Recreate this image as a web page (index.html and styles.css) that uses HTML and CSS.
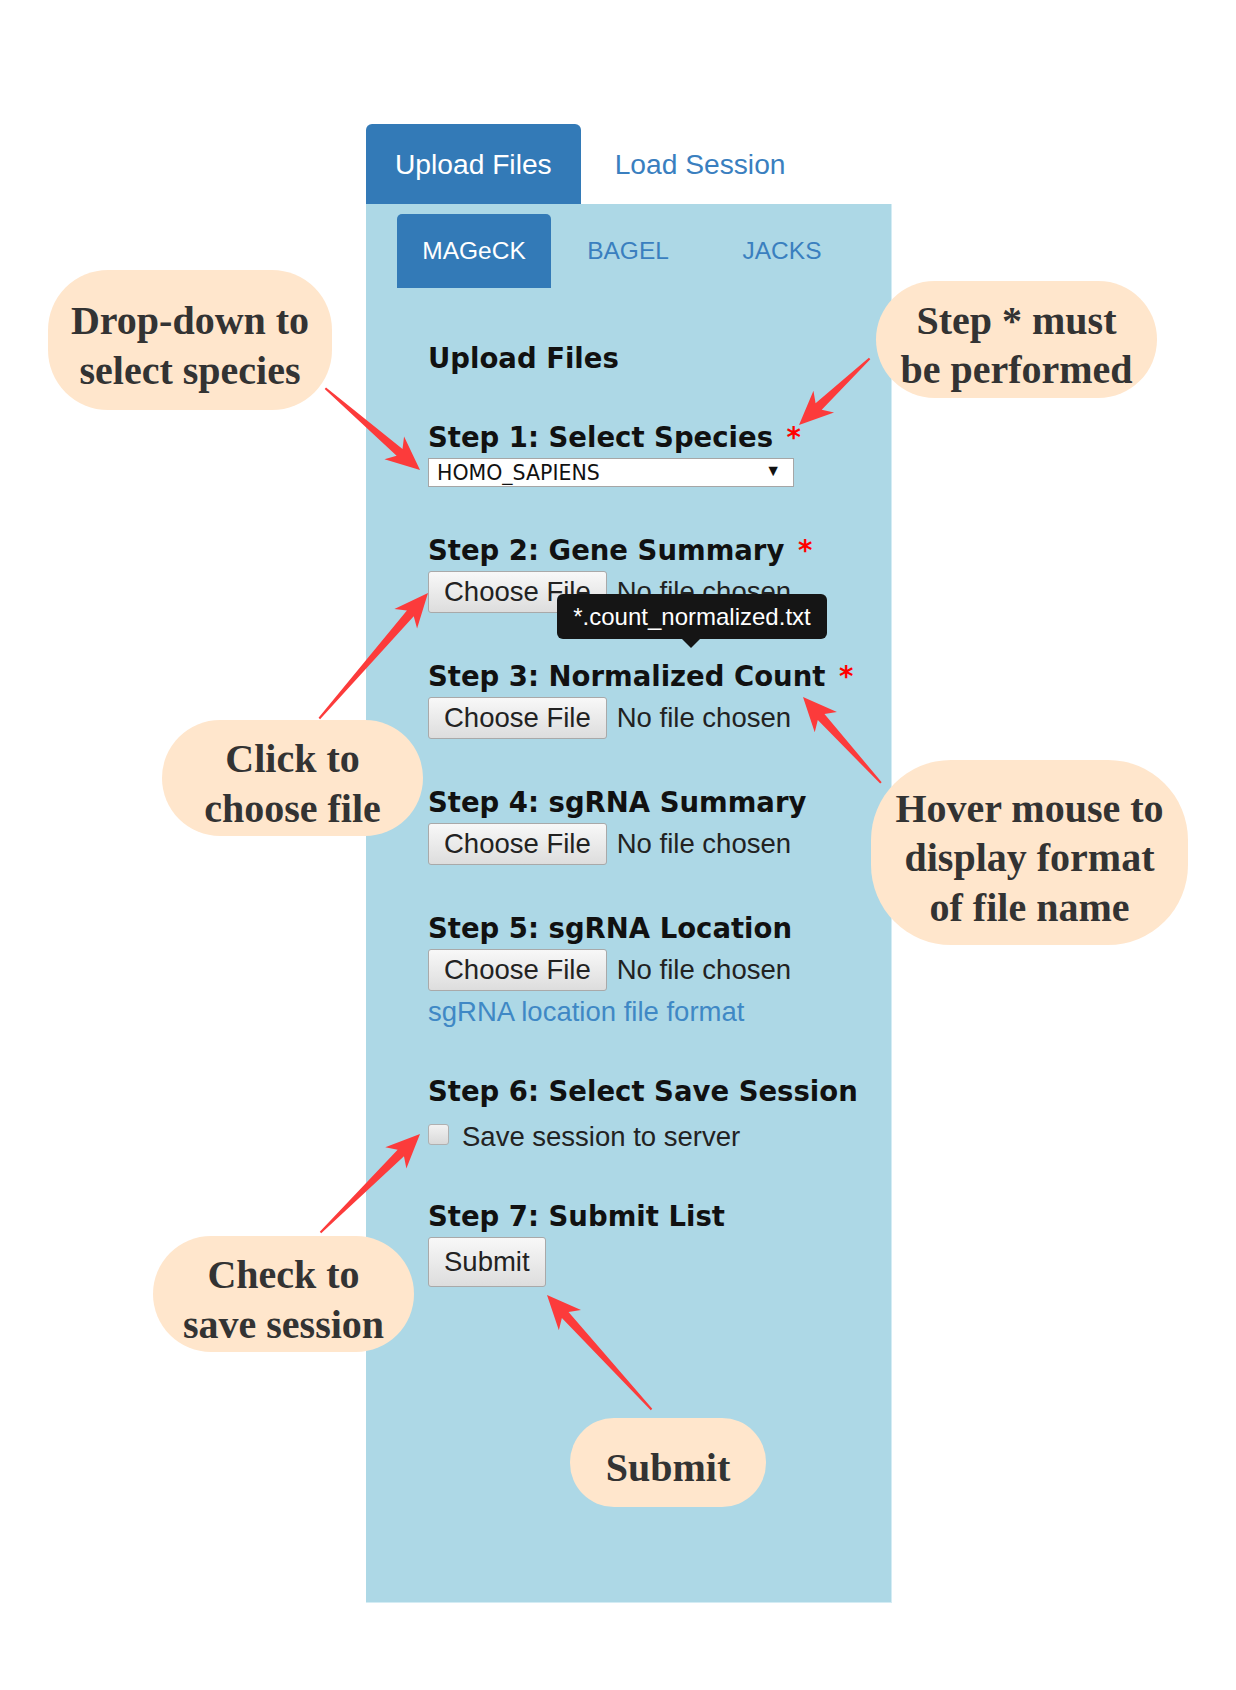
FILE: index.html
```html
<!DOCTYPE html>
<html>
<head>
  <title>Upload Files</title>
  <link rel="stylesheet" href="styles.css">
</head>
<body>
  <div class="page">
    <div class="app">
      <ul class="top-tabs">
        <li class="active"><a href="#">Upload Files</a></li>
        <li><a href="#">Load Session</a></li>
      </ul>

      <div class="panel">
        <ul class="sub-tabs">
          <li class="active"><a href="#">MAGeCK</a></li>
          <li><a href="#">BAGEL</a></li>
          <li><a href="#">JACKS</a></li>
        </ul>

        <div class="form">
          <h3>Upload Files</h3>

          <div class="step">
            <label>Step 1: Select Species <span class="req">*</span></label>
            <div class="select-wrap">
              <select>
                <option>HOMO_SAPIENS</option>
              </select>
            </div>
          </div>

          <div class="step">
            <label>Step 2: Gene Summary <span class="req">*</span></label>
            <div class="file-row">
              <button class="btn">Choose File</button>
              <span class="file-note">No file chosen</span>
            </div>
          </div>

          <div class="step">
            <label>Step 3: Normalized Count <span class="req">*</span></label>
            <div class="file-row">
              <button class="btn">Choose File</button>
              <span class="file-note">No file chosen</span>
            </div>
          </div>

          <div class="step">
            <label>Step 4: sgRNA Summary</label>
            <div class="file-row">
              <button class="btn">Choose File</button>
              <span class="file-note">No file chosen</span>
            </div>
          </div>

          <div class="step">
            <label>Step 5: sgRNA Location</label>
            <div class="file-row">
              <button class="btn">Choose File</button>
              <span class="file-note">No file chosen</span>
            </div>
            <a class="format-link" href="#">sgRNA location file format</a>
          </div>

          <div class="step">
            <label>Step 6: Select Save Session</label>
            <div class="check-row">
              <input type="checkbox" id="save">
              <span>Save session to server</span>
            </div>
          </div>

          <div class="step step-submit">
            <label>Step 7: Submit List</label>
            <button class="btn btn-submit">Submit</button>
          </div>
        </div>
      </div>
    </div>

    <!-- annotation arrows -->
    <svg class="arrows" width="1236" height="1690">
      <polygon transform="translate(420,470) rotate(40.8)" points="0,0 -34,-15 -27,-4.5 -125,-1 -125,1 -27,4.5 -34,15"/>
      <polygon transform="translate(799,425) rotate(136.7)" points="0,0 -34,-15 -27,-4.5 -97,-1 -97,1 -27,4.5 -34,15"/>
      <polygon transform="translate(428,593) rotate(-49.1)" points="0,0 -34,-15 -27,-4.5 -166,-1 -166,1 -27,4.5 -34,15"/>
      <polygon transform="translate(803,697) rotate(-132.2)" points="0,0 -34,-15 -27,-4.5 -116,-1 -116,1 -27,4.5 -34,15"/>
      <polygon transform="translate(420,1134) rotate(-44.7)" points="0,0 -34,-15 -27,-4.5 -140,-1 -140,1 -27,4.5 -34,15"/>
      <polygon transform="translate(547,1295) rotate(-132.4)" points="0,0 -34,-15 -27,-4.5 -155,-1 -155,1 -27,4.5 -34,15"/>
    </svg>

    <div class="tooltip">*.count_normalized.txt</div>

    <div class="note note-species">Drop-down to<br>select species</div>
    <div class="note note-required">Step * must<br>be performed</div>
    <div class="note note-choose">Click to<br>choose file</div>
    <div class="note note-hover">Hover mouse to<br>display format<br>of file name</div>
    <div class="note note-save">Check to<br>save session</div>
    <div class="note note-submit">Submit</div>
  </div>
</body>
</html>
```

FILE: styles.css
```css
body {
  margin: 0;
  background: #fff;
  font-family: "Liberation Sans", Arial, sans-serif;
  color: #222;
}

.page {
  position: relative;
  width: 1236px;
  height: 1690px;
  overflow: hidden;
}

.app {
  width: 526px;
  margin-left: 366px;
  padding-top: 124px;
}

/* top tabs */
.top-tabs {
  display: flex;
  list-style: none;
  margin: 0;
  padding: 0;
  height: 80px;
}

.top-tabs a {
  display: flex;
  align-items: center;
  height: 80px;
  padding: 0 29px;
  font-size: 28.2px;
  color: #3a7fbf;
  text-decoration: none;
  border-radius: 6px 6px 0 0;
}

.top-tabs li + li a {
  padding-left: 34px;
}

.top-tabs .active a {
  background: #337ab7;
  color: #fff;
}

.panel {
  box-sizing: border-box;
  height: 1399px;
  padding: 10px 0 0 31px;
  background: #add8e6;
  border-right: 1px solid #d4ecf4;
  border-bottom: 1px solid #d4ecf4;
}

/* sub tabs */
.sub-tabs {
  display: flex;
  list-style: none;
  margin: 0;
  padding: 0;
  height: 74px;
}

.sub-tabs a {
  display: flex;
  align-items: center;
  justify-content: center;
  width: 154px;
  height: 74px;
  font-size: 24.5px;
  color: #3a7fbf;
  text-decoration: none;
  border-radius: 5px 5px 0 0;
}

.sub-tabs .active a {
  background: #337ab7;
  color: #fff;
}

/* form */
.form {
  margin-left: 31px;
}

.form h3,
.step label {
  display: block;
  margin: 0;
  font-family: "DejaVu Sans", Verdana, sans-serif;
  font-size: 27.5px;
  font-weight: bold;
  line-height: 32px;
  color: #111;
  white-space: nowrap;
}

.form h3 {
  margin-top: 54px;
}

.step {
  margin-top: 47px;
}

.step label {
  margin-bottom: 5px;
}

.req {
  margin-left: 4px;
  color: #f00;
}

.select-wrap {
  position: relative;
  width: 366px;
  margin-top: 3px;
}

.select-wrap select {
  -webkit-appearance: none;
  appearance: none;
  box-sizing: border-box;
  width: 366px;
  height: 29px;
  padding: 0 0 0 8px;
  border: 1px solid #a6a6a6;
  border-radius: 0;
  background: #fff;
  font-family: "DejaVu Sans", Verdana, sans-serif;
  font-size: 20.5px;
  color: #111;
}

.select-wrap::after {
  content: "\25BC";
  position: absolute;
  right: 13px;
  top: 4px;
  font-size: 16px;
  color: #111;
}

.file-row {
  display: flex;
  align-items: center;
}

.btn {
  box-sizing: border-box;
  height: 42px;
  padding: 0 15px;
  border: 1px solid #a9a9a9;
  border-radius: 3px;
  background: linear-gradient(#f8f8f8, #dddddd);
  font-family: "Liberation Sans", Arial, sans-serif;
  font-size: 27.5px;
  color: #222;
}

.file-note {
  margin-left: 10px;
  font-size: 27.5px;
  color: #222;
}

.format-link {
  display: block;
  margin-top: 5px;
  font-size: 27.5px;
  line-height: 32px;
  color: #3f88c5;
  text-decoration: none;
}

.check-row {
  display: flex;
  align-items: center;
  height: 32px;
  margin-top: 14px;
  font-size: 27.5px;
  color: #222;
}

.check-row input {
  -webkit-appearance: none;
  appearance: none;
  box-sizing: border-box;
  width: 21px;
  height: 21px;
  margin: 0 13px 6px 0;
  border: 1px solid #b0b0b0;
  border-radius: 3px;
  background: linear-gradient(#f2f2f2, #d9d9d9);
}

.step-submit {
  margin-top: 47px;
}

.btn-submit {
  height: 50px;
}

/* overlays */
.arrows {
  position: absolute;
  left: 0;
  top: 0;
  pointer-events: none;
}

.arrows polygon {
  fill: #fc3b3b;
}

.tooltip {
  position: absolute;
  left: 557px;
  top: 594px;
  width: 270px;
  height: 45px;
  line-height: 45px;
  border-radius: 6px;
  background: #151515;
  color: #fff;
  font-size: 24px;
  text-align: center;
}

.tooltip::after {
  content: "";
  position: absolute;
  left: 125px;
  bottom: -9px;
  border-left: 9px solid transparent;
  border-right: 9px solid transparent;
  border-top: 9px solid #151515;
}

.note {
  position: absolute;
  box-sizing: border-box;
  display: flex;
  align-items: center;
  justify-content: center;
  padding-top: 11px;
  text-align: center;
  background: #ffe6cc;
  border-radius: 60px;
  font-family: "Liberation Serif", "Times New Roman", serif;
  font-size: 40px;
  font-weight: bold;
  line-height: 49.5px;
  color: #333;
}

.note-species {
  left: 48px;
  top: 270px;
  width: 284px;
  height: 140px;
}

.note-required {
  left: 876px;
  top: 281px;
  width: 281px;
  height: 117px;
}

.note-choose {
  left: 162px;
  top: 720px;
  width: 261px;
  height: 116px;
}

.note-hover {
  left: 871px;
  top: 760px;
  width: 317px;
  height: 185px;
  border-radius: 80px;
}

.note-save {
  left: 153px;
  top: 1236px;
  width: 261px;
  height: 116px;
}

.note-submit {
  left: 570px;
  top: 1418px;
  width: 196px;
  height: 89px;
  border-radius: 44px;
}
```
